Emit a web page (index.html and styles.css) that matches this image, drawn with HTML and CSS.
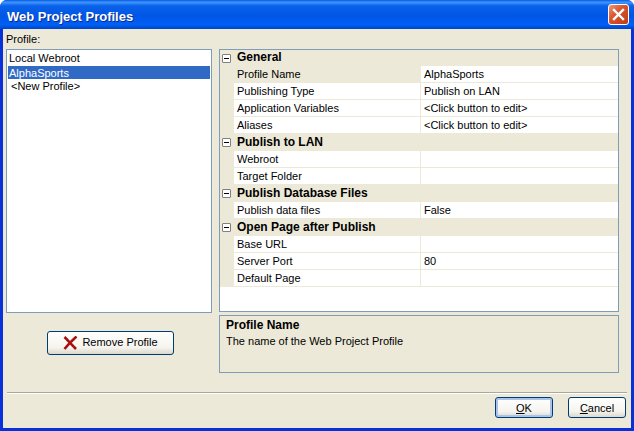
FILE: index.html
```html
<!DOCTYPE html>
<html lang="en">
<head>
    <meta charset="UTF-8">
    <title>Web Project Profiles</title>
    <link rel="stylesheet" href="styles.css">
</head>
<body>

<div class="window">
    <div class="titlebar">
        <span class="title">Web Project Profiles</span>
        <button class="close">
            <svg width="13" height="13" viewBox="0 0 13 13"><path d="M2 2 L11 11 M11 2 L2 11" stroke="#fff" stroke-width="2.4" stroke-linecap="square"/></svg>
        </button>
    </div>

    <div class="content">
        <div class="main">
            <div class="left">
                <div class="label">Profile:</div>
                <div class="list">
                    <div class="list-item">Local Webroot</div>
                    <div class="list-item selected">AlphaSports</div>
                    <div class="list-item new">&lt;New Profile&gt;</div>
                </div>
                <div class="remove-wrap">
                    <button class="btn remove">
                        <svg width="15" height="14" viewBox="0 0 15 14"><path d="M1.5 1 C5 4.5 9 9 13 13 M13.5 .5 C9 4.5 5 8.5 1.5 13" fill="none" stroke="#a80f0f" stroke-width="2.6"/></svg>
                        <span class="remove-text">Remove Profile</span>
                    </button>
                </div>
            </div>

            <div class="right">
                <div class="grid">
                    <div class="cat"><span class="toggle"></span><b>General</b></div>
                    <div class="row active"><div class="name">Profile Name</div><div class="value">AlphaSports</div></div>
                    <div class="row"><div class="name">Publishing Type</div><div class="value">Publish on LAN</div></div>
                    <div class="row"><div class="name">Application Variables</div><div class="value">&lt;Click button to edit&gt;</div></div>
                    <div class="row"><div class="name">Aliases</div><div class="value">&lt;Click button to edit&gt;</div></div>
                    <div class="cat"><span class="toggle"></span><b>Publish to LAN</b></div>
                    <div class="row"><div class="name">Webroot</div><div class="value"></div></div>
                    <div class="row"><div class="name">Target Folder</div><div class="value"></div></div>
                    <div class="cat"><span class="toggle"></span><b>Publish Database Files</b></div>
                    <div class="row"><div class="name">Publish data files</div><div class="value">False</div></div>
                    <div class="cat"><span class="toggle"></span><b>Open Page after Publish</b></div>
                    <div class="row"><div class="name">Base URL</div><div class="value"></div></div>
                    <div class="row"><div class="name">Server Port</div><div class="value">80</div></div>
                    <div class="row"><div class="name">Default Page</div><div class="value"></div></div>
                </div>
                <div class="help">
                    <b>Profile Name</b>
                    <div class="help-text">The name of the Web Project Profile</div>
                </div>
            </div>
        </div>

        <div class="separator"></div>

        <div class="footer">
            <button class="btn ok"><span><u>O</u>K</span></button>
            <button class="btn cancel"><span><u>C</u>ancel</span></button>
        </div>
    </div>
</div>

</body>
</html>
```

FILE: styles.css
```css
* {
    box-sizing: border-box;
}

body {
    margin: 0;
    font-family: "Liberation Sans", Arial, sans-serif;
    font-size: 11px;
    color: #000;
    background-color: #fff;
    overflow: hidden;
}

b {
    font-size: 12px;
}

.window {
    width: 634px;
    height: 431px;
    display: flex;
    flex-direction: column;
    background-color: #0831d9;
    border-radius: 7px 7px 0 0;
    overflow: hidden;
}

.titlebar {
    height: 29px;
    flex: none;
    display: flex;
    align-items: center;
    justify-content: space-between;
    padding: 3px 5px 0 7px;
    background: linear-gradient(to bottom, #0a5be0 0%, #3d95ff 8%, #0a62ea 20%, #0055e5 55%, #0060f5 85%, #0043c8 100%);
}

.title {
    font-size: 13px;
    font-weight: bold;
    color: #fff;
    text-shadow: 1px 1px 0 #0a2a90;
}

.close {
    width: 21px;
    height: 21px;
    margin-top: -3px;
    padding: 0;
    display: flex;
    align-items: center;
    justify-content: center;
    border: 1px solid #fff;
    border-radius: 3px;
    background: linear-gradient(135deg, #ec9a80 0%, #d9562f 40%, #c13a12 100%);
}

.content {
    flex: 1;
    display: flex;
    flex-direction: column;
    margin: 0 3px 3px 3px;
    background-color: #ece9d8;
}

.main {
    display: flex;
    gap: 7px;
    padding: 0 12px 0 3px;
    height: 344px;
    flex: none;
}

.left {
    width: 206px;
    flex: none;
    display: flex;
    flex-direction: column;
}

.label {
    height: 20px;
    padding-top: 3px;
    line-height: 15px;
}

.list {
    height: 264px;
    flex: none;
    padding: 3px 1px;
    background-color: #fff;
    border: 1px solid #7f9db9;
}

.list-item {
    height: 13px;
    line-height: 15px;
    padding-left: 1px;
}

.list-item:first-child {
    line-height: 11px;
}

.list-item.selected {
    background-color: #316ac5;
    color: #fff;
}

.list-item.new {
    padding-left: 3px;
}

.remove-wrap {
    display: flex;
    justify-content: center;
    padding: 18px 0 0 3px;
}

.btn {
    font: inherit;
    color: #000;
    border: 1px solid #003c74;
    border-radius: 3px;
    background: linear-gradient(to bottom, #fff 0%, #f5f4ee 70%, #dcd8cc 100%);
    padding: 0;
}

.remove {
    width: 127px;
    height: 24px;
    display: flex;
    align-items: center;
    justify-content: center;
    gap: 4px;
}

.remove-text {
    margin-bottom: 2px;
}

.right {
    flex: 1;
    display: flex;
    flex-direction: column;
    padding-top: 20px;
}

.grid {
    height: 263px;
    flex: none;
    background-color: #fff;
    border: 1px solid #7f9db9;
}

.cat {
    height: 17px;
    display: flex;
    align-items: center;
    background-color: #ece9d8;
}

.cat:first-child {
    height: 16px;
}

.cat b {
    margin: 0 0 2px 6px;
}

.toggle {
    position: relative;
    width: 9px;
    height: 9px;
    margin-left: 2px;
    border: 1px solid #808080;
    border-radius: 1px;
    background-color: #fff;
}

.toggle::after {
    content: "";
    position: absolute;
    left: 1px;
    top: 3px;
    width: 5px;
    height: 1px;
    background-color: #000;
}

.row {
    height: 17px;
    display: flex;
    line-height: 16px;
    border-bottom: 1px solid #ece9d8;
    border-left: 14px solid #ece9d8;
}

.name {
    width: 187px;
    flex: none;
    padding-left: 3px;
    border-right: 1px solid #ece9d8;
}

.row.active .name {
    background-color: #ece9d8;
}

.value {
    flex: 1;
    padding-left: 3px;
}

.help {
    height: 58px;
    flex: none;
    margin-top: 3px;
    padding: 2px 6px;
    line-height: 15px;
    border: 1px solid #7f9db9;
}

.help-text {
    margin-top: 1px;
}

.separator {
    height: 2px;
    flex: none;
    margin: 19px 4px 0 4px;
    border-top: 1px solid #aca899;
    border-bottom: 1px solid #fff;
}

.footer {
    display: flex;
    justify-content: flex-end;
    gap: 15px;
    padding: 3px 5px 0 0;
}

.ok, .cancel {
    width: 58px;
    height: 21px;
}

.ok {
    box-shadow: inset 0 0 0 2px #a9c3ea;
}
```
